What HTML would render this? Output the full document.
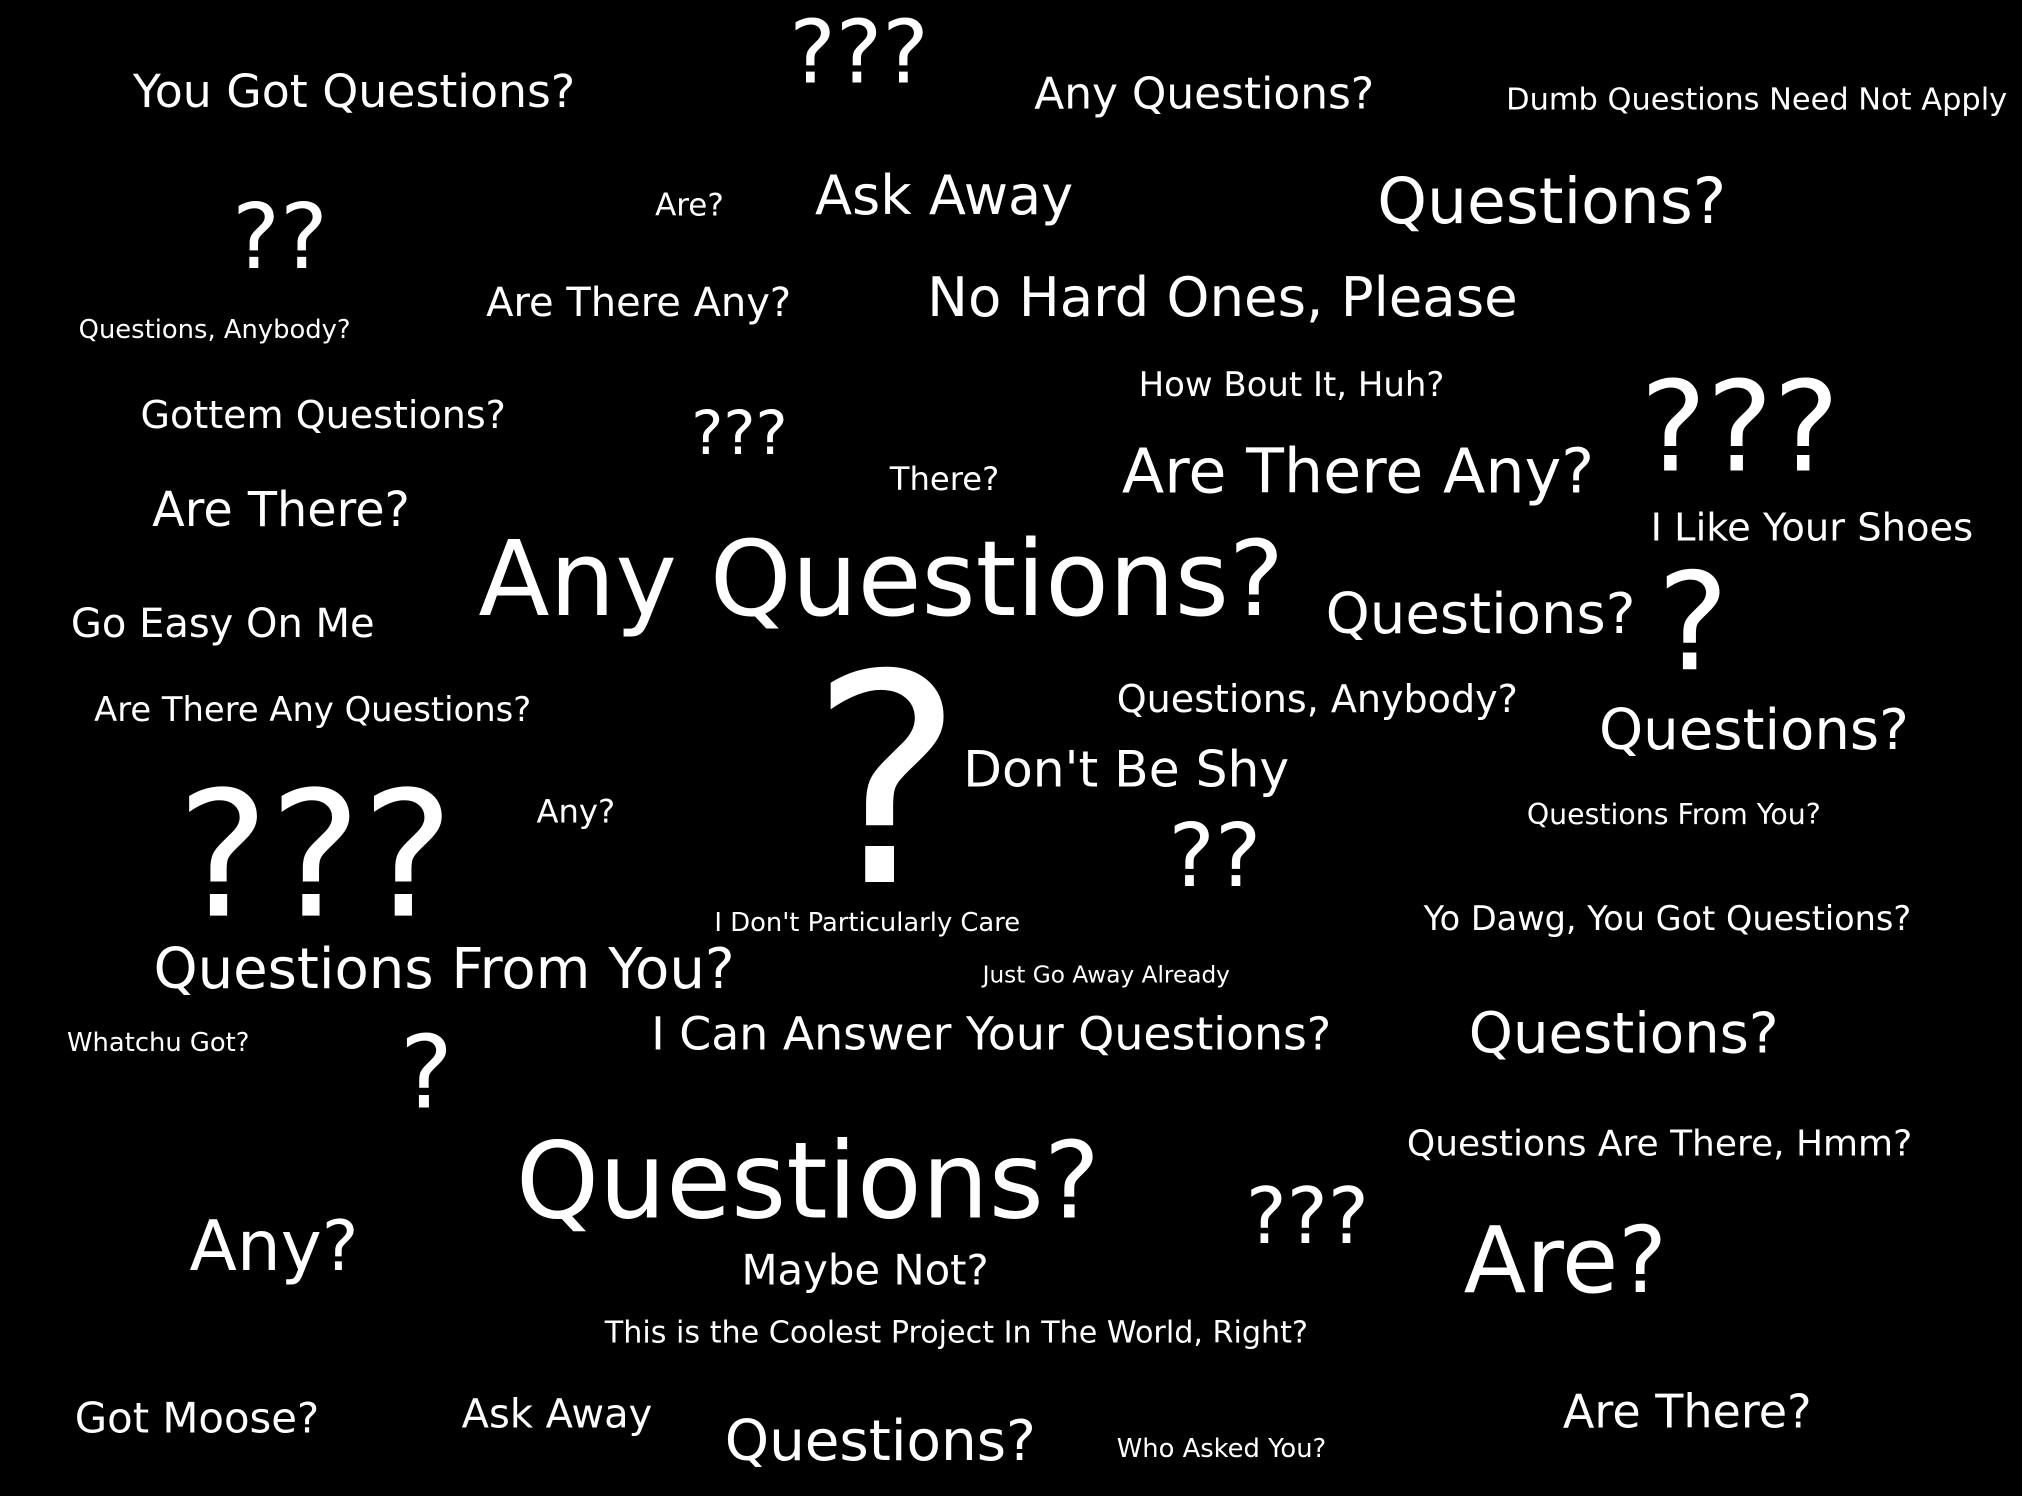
<!DOCTYPE html>
<html><head><meta charset="utf-8">
<style>
html,body{margin:0;padding:0;background:#000;width:2022px;height:1496px;overflow:hidden}
#c{position:absolute;left:0;top:0;width:1568px;height:1160px;transform:scale(1.28954);transform-origin:0 0}
#c div{position:absolute;color:#fff;font-family:"DejaVu Sans","Liberation Sans",sans-serif;line-height:1;white-space:nowrap}
</style></head><body><div id="c">
<div style="left:612px;top:7.5px;font-size:68px">???</div>
<div style="left:103px;top:54px;font-size:35.5px">You Got Questions?</div>
<div style="left:802px;top:56.2px;font-size:34px">Any Questions?</div>
<div style="left:1168px;top:66px;font-size:23.6px">Dumb Questions Need Not Apply</div>
<div style="left:180px;top:148.8px;font-size:70px">??</div>
<div style="left:508px;top:146.7px;font-size:24px">Are?</div>
<div style="left:632px;top:130.5px;font-size:42px">Ask Away</div>
<div style="left:1068px;top:131.5px;font-size:49px">Questions?</div>
<div style="left:61px;top:245.1px;font-size:20px">Questions, Anybody?</div>
<div style="left:377px;top:219.8px;font-size:31px">Are There Any?</div>
<div style="left:719px;top:210.2px;font-size:42.3px">No Hard Ones, Please</div>
<div style="left:883px;top:285.8px;font-size:26.3px">How Bout It, Huh?</div>
<div style="left:1272px;top:282.9px;font-size:97px">???</div>
<div style="left:109px;top:308px;font-size:29.5px">Gottem Questions?</div>
<div style="left:536px;top:313.2px;font-size:47px">???</div>
<div style="left:690px;top:358.9px;font-size:25px">There?</div>
<div style="left:870px;top:342.4px;font-size:48px">Are There Any?</div>
<div style="left:1280px;top:394.8px;font-size:29.8px">I Like Your Shoes</div>
<div style="left:118px;top:376.7px;font-size:37px">Are There?</div>
<div style="left:371px;top:409.8px;font-size:80.6px">Any Questions?</div>
<div style="left:55px;top:468.8px;font-size:31px">Go Easy On Me</div>
<div style="left:1028px;top:456.2px;font-size:43.5px">Questions?</div>
<div style="left:1285px;top:431.2px;font-size:105px">?</div>
<div style="left:73px;top:537.8px;font-size:26.2px">Are There Any Questions?</div>
<div style="left:866px;top:528px;font-size:29.5px">Questions, Anybody?</div>
<div style="left:628px;top:494.7px;font-size:225px">?</div>
<div style="left:1240px;top:546.2px;font-size:43.5px">Questions?</div>
<div style="left:747px;top:578px;font-size:39px">Don't Be Shy</div>
<div style="left:137px;top:595.8px;font-size:135px">???</div>
<div style="left:416px;top:616.9px;font-size:25px">Any?</div>
<div style="left:1184px;top:622.4px;font-size:22px">Questions From You?</div>
<div style="left:906px;top:630.5px;font-size:68px">??</div>
<div style="left:554px;top:705.1px;font-size:20px">I Don't Particularly Care</div>
<div style="left:1104px;top:700px;font-size:26px">Yo Dawg, You Got Questions?</div>
<div style="left:119px;top:731.2px;font-size:43.5px">Questions From You?</div>
<div style="left:762px;top:747.8px;font-size:18px">Just Go Away Already</div>
<div style="left:52px;top:798.1px;font-size:20px">Whatchu Got?</div>
<div style="left:310px;top:794px;font-size:78px">?</div>
<div style="left:505px;top:785px;font-size:35.5px">I Can Answer Your Questions?</div>
<div style="left:1139px;top:781.2px;font-size:43.5px">Questions?</div>
<div style="left:1091px;top:873.4px;font-size:27.9px">Questions Are There, Hmm?</div>
<div style="left:400px;top:875.6px;font-size:82px">Questions?</div>
<div style="left:966px;top:914.2px;font-size:60px">???</div>
<div style="left:147px;top:939.6px;font-size:53.7px">Any?</div>
<div style="left:1135px;top:941.9px;font-size:71px">Are?</div>
<div style="left:575px;top:968.6px;font-size:32.4px">Maybe Not?</div>
<div style="left:469px;top:1022.2px;font-size:23.4px">This is the Coolest Project In The World, Right?</div>
<div style="left:58px;top:1083.6px;font-size:32.4px">Got Moose?</div>
<div style="left:358px;top:1081.8px;font-size:31px">Ask Away</div>
<div style="left:562px;top:1096px;font-size:43.7px">Questions?</div>
<div style="left:866px;top:1113.1px;font-size:20px">Who Asked You?</div>
<div style="left:1212px;top:1077.8px;font-size:35.7px">Are There?</div>
</div></body></html>
